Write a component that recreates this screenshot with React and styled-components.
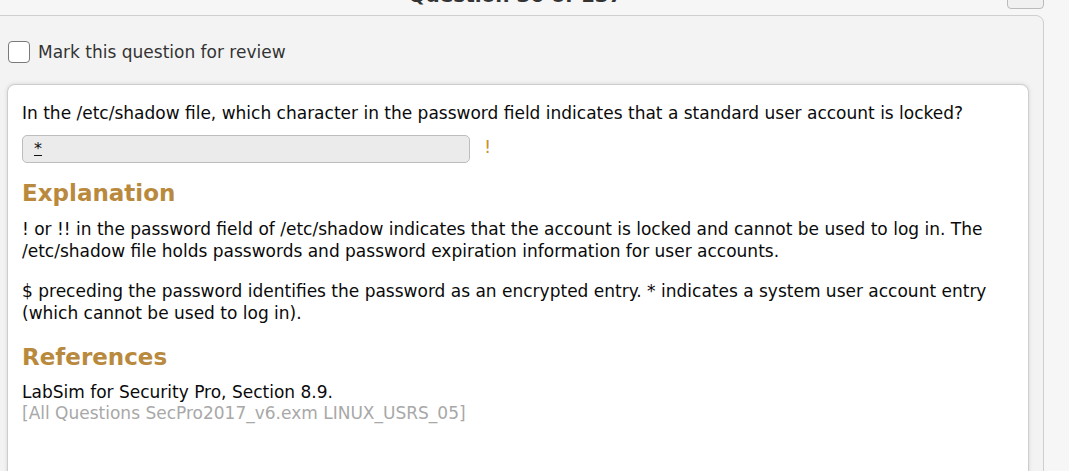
import React from "react";
import styled, { createGlobalStyle } from "styled-components";

const Global = createGlobalStyle`
  html, body { margin: 0; padding: 0; }
  body {
    background: #f6f6f6;
    font-family: "DejaVu Sans", Verdana, sans-serif;
    overflow: hidden;
  }
`;

const Page = styled.div`
  width: 1069px;
  height: 471px;
  overflow: hidden;
  background: #f6f6f6;
`;

const TopBar = styled.div`
  position: relative;
  height: 15px;
  display: flex;
  justify-content: center;
  align-items: flex-start;
  overflow: hidden;
`;

const Title = styled.h1`
  margin: -17px 38px 0 0;
  font-size: 20px;
  font-weight: bold;
  color: #333;
  line-height: 24px;
`;

const CornerButton = styled.div`
  position: absolute;
  right: 25px;
  top: -10px;
  width: 35px;
  height: 17px;
  border: 1px solid #bbb;
  border-radius: 4px;
  background: #f0f0f0;
`;

const Panel = styled.div`
  margin-left: -10px;
  width: 1054px;
  height: 470px;
  box-sizing: border-box;
  background: #f3f3f3;
  border: 1px solid #cfcfcf;
  border-top-right-radius: 8px;
  padding: 24px 0 0 17px;
`;

const ReviewRow = styled.label`
  display: flex;
  align-items: center;
  gap: 8px;
  font-size: 17px;
  color: #333;
  height: 23px;
`;

const Box = styled.span`
  width: 20px;
  height: 20px;
  border: 1px solid #7a7a7a;
  border-radius: 4px;
  background: #fff;
`;

const Card = styled.div`
  margin: 21px 0 0 -1px;
  width: 1022px;
  height: 400px;
  box-sizing: border-box;
  background: #fff;
  border: 1px solid #cdcdcd;
  border-radius: 8px;
  box-shadow: 0 0 4px rgba(0, 0, 0, 0.12);
  padding: 17px 14px;
  font-size: 17px;
  color: #0a0a0a;
  line-height: 22px;
`;

const Question = styled.p`
  margin: 0;
`;

const AnswerRow = styled.div`
  display: flex;
  align-items: center;
  gap: 14px;
  margin-top: 11px;
`;

const AnswerBox = styled.div`
  width: 448px;
  height: 28px;
  box-sizing: border-box;
  background: #ebebeb;
  border: 1px solid #bdbdbd;
  border-radius: 5px;
  padding: 2px 11px;
  font-size: 16px;
  line-height: 22px;
  color: #111;
`;

const Underlined = styled.span`
  text-decoration: underline;
`;

const Mark = styled.span`
  color: #c8922e;
  font-size: 18px;
  margin-top: -4px;
`;

const Heading = styled.h2`
  margin: ${(p) => p.$top}px 0 ${(p) => p.$bottom}px 0;
  font-size: 23px;
  line-height: 30px;
  font-weight: bold;
  color: #b98a3e;
`;

const Para = styled.p`
  margin: 0 0 18px 0;
`;

const Ref = styled.div`
  color: ${(p) => (p.$muted ? "#a8a8a8" : "#0a0a0a")};
  line-height: ${(p) => (p.$muted ? 21 : 22)}px;
`;

export default function App() {
  return (
    <Page>
      <Global />
      <TopBar>
        <Title>Question 30 of 137</Title>
        <CornerButton />
      </TopBar>
      <Panel>
        <ReviewRow>
          <Box />
          Mark this question for review
        </ReviewRow>
        <Card>
          <Question>
            In the /etc/shadow file, which character in the password field indicates that a standard user account is locked?
          </Question>
          <AnswerRow>
            <AnswerBox>
              <Underlined>*</Underlined>
            </AnswerBox>
            <Mark>!</Mark>
          </AnswerRow>
          <Heading $top={15} $bottom={10}>Explanation</Heading>
          <Para>
            ! or !! in the password field of /etc/shadow indicates that the account is locked and cannot be used to log in. The /etc/shadow file holds passwords and password expiration information for user accounts.
          </Para>
          <Para>
            $ preceding the password identifies the password as an encrypted entry. * indicates a system user account entry (which cannot be used to log in).
          </Para>
          <Heading $top={2} $bottom={9}>References</Heading>
          <Ref>LabSim for Security Pro, Section 8.9.</Ref>
          <Ref $muted>[All Questions SecPro2017_v6.exm LINUX_USRS_05]</Ref>
        </Card>
      </Panel>
    </Page>
  );
}
